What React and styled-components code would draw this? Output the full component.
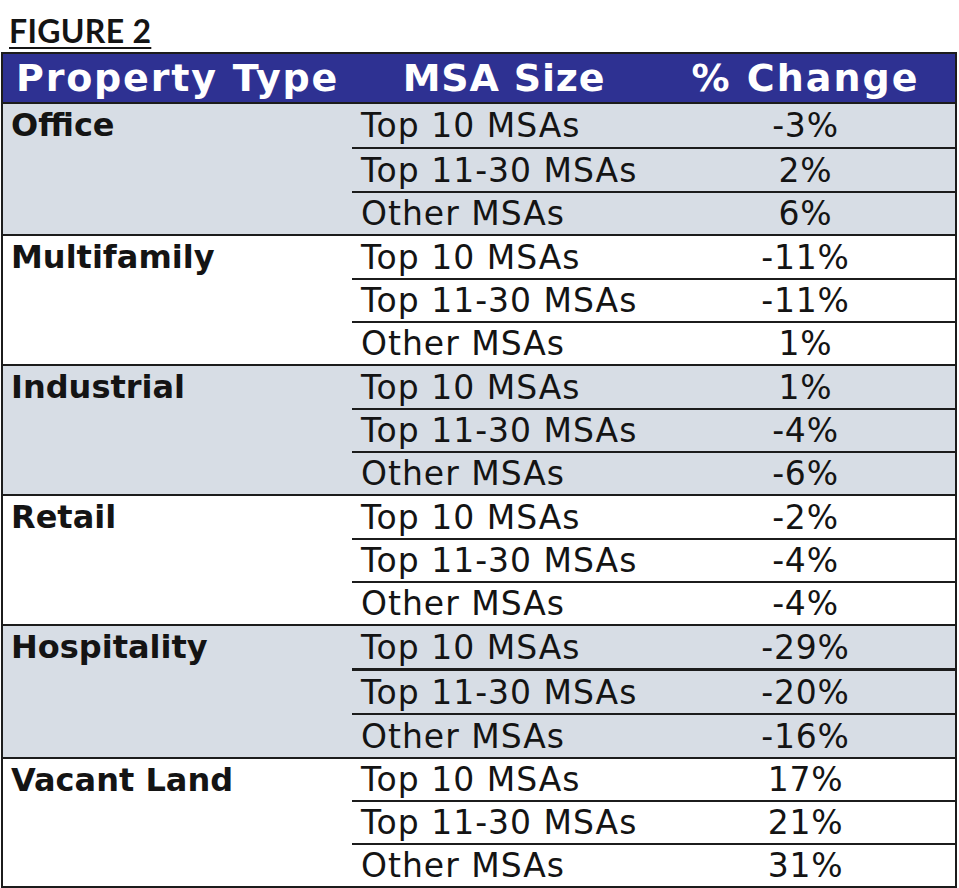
import React from "react";
import styled, { createGlobalStyle } from "styled-components";

const Global = createGlobalStyle`
  html, body { margin: 0; padding: 0; background: #ffffff; }
  body { font-family: "DejaVu Sans", Verdana, sans-serif; color: #141414; }
`;

const Page = styled.div`
  width: 959px;
  height: 888px;
  padding: 14px 2px 0 1px;
  box-sizing: border-box;
  overflow: hidden;
`;

const Title = styled.div`
  font-family: Lato, "Liberation Sans", sans-serif;
  font-weight: 700;
  font-size: 32px;
  line-height: 33px;
  padding-left: 8px;
  height: 38px;
  color: #141414;
  letter-spacing: 0.3px;
  span {
    text-decoration: underline;
    text-decoration-thickness: 2px;
    text-underline-offset: 4px;
  }
`;

const Table = styled.div`
  border: 2px solid #1c1c1c;
  display: flex;
  flex-direction: column;
`;

const Header = styled.div`
  display: grid;
  grid-template-columns: 349px 304px 1fr;
  height: 48px;
  align-items: center;
  background: #2e3192;
  color: #ffffff;
  font-weight: 700;
  font-size: 38px;
  white-space: nowrap;
`;

const HeadCell = styled.div`
  text-align: ${(p) => (p.$left ? "left" : "center")};
  padding-left: ${(p) => (p.$left ? "13px" : "0")};
  letter-spacing: ${(p) => p.$ls || "0.8px"};
`;

const Group = styled.div`
  display: flex;
  border-top: 2px solid #1c1c1c;
  background: ${(p) => (p.$shaded ? "#d7dde5" : "#ffffff")};
`;

const TypeCell = styled.div`
  width: 349px;
  flex: none;
  font-weight: 700;
  font-size: 32px;
  height: 42px;
  line-height: 42px;
  padding-left: 8px;
  box-sizing: border-box;
  white-space: nowrap;
`;

const Rows = styled.div`
  flex: 1;
  display: flex;
  flex-direction: column;
`;

const Row = styled.div`
  display: grid;
  grid-template-columns: 304px 1fr;
  align-items: center;
  height: ${(p) => p.$h}px;
  font-size: 33px;
  letter-spacing: 1px;
  white-space: nowrap;
  border-bottom: ${(p) => (p.$last ? "none" : `${p.$line}px solid #1c1c1c`)};
`;

const Msa = styled.div`
  padding-left: 9px;
`;

const Pct = styled.div`
  text-align: center;
  letter-spacing: 0.8px;
`;

const data = [
  { type: "Office", vals: ["-3%", "2%", "6%"], h: [43, 42, 41], lines: [2, 2] },
  { type: "Multifamily", vals: ["-11%", "-11%", "1%"], h: [42, 41, 41], lines: [2, 2] },
  { type: "Industrial", vals: ["1%", "-4%", "-6%"], h: [42, 41, 41], lines: [2, 2] },
  { type: "Retail", vals: ["-2%", "-4%", "-4%"], h: [42, 41, 41], lines: [2, 2] },
  { type: "Hospitality", vals: ["-29%", "-20%", "-16%"], h: [42, 42, 42], lines: [3, 2] },
  { type: "Vacant Land", vals: ["17%", "21%", "31%"], h: [41, 41, 41], lines: [2, 2] },
];

const sizes = ["Top 10 MSAs", "Top 11-30 MSAs", "Other MSAs"];

export default function App() {
  return (
    <>
      <Global />
      <Page>
        <Title>
          <span>FIGURE 2</span>
        </Title>
        <Table>
          <Header>
            <HeadCell $left $ls="1.8px">Property Type</HeadCell>
            <HeadCell>MSA Size</HeadCell>
            <HeadCell $ls="2px">% Change</HeadCell>
          </Header>
          {data.map((g, gi) => (
            <Group key={g.type} $shaded={gi % 2 === 0}>
              <TypeCell>{g.type}</TypeCell>
              <Rows>
                {g.vals.map((v, i) => (
                  <Row key={i} $h={g.h[i]} $last={i === 2} $line={g.lines[i]}>
                    <Msa>{sizes[i]}</Msa>
                    <Pct>{v}</Pct>
                  </Row>
                ))}
              </Rows>
            </Group>
          ))}
        </Table>
      </Page>
    </>
  );
}
